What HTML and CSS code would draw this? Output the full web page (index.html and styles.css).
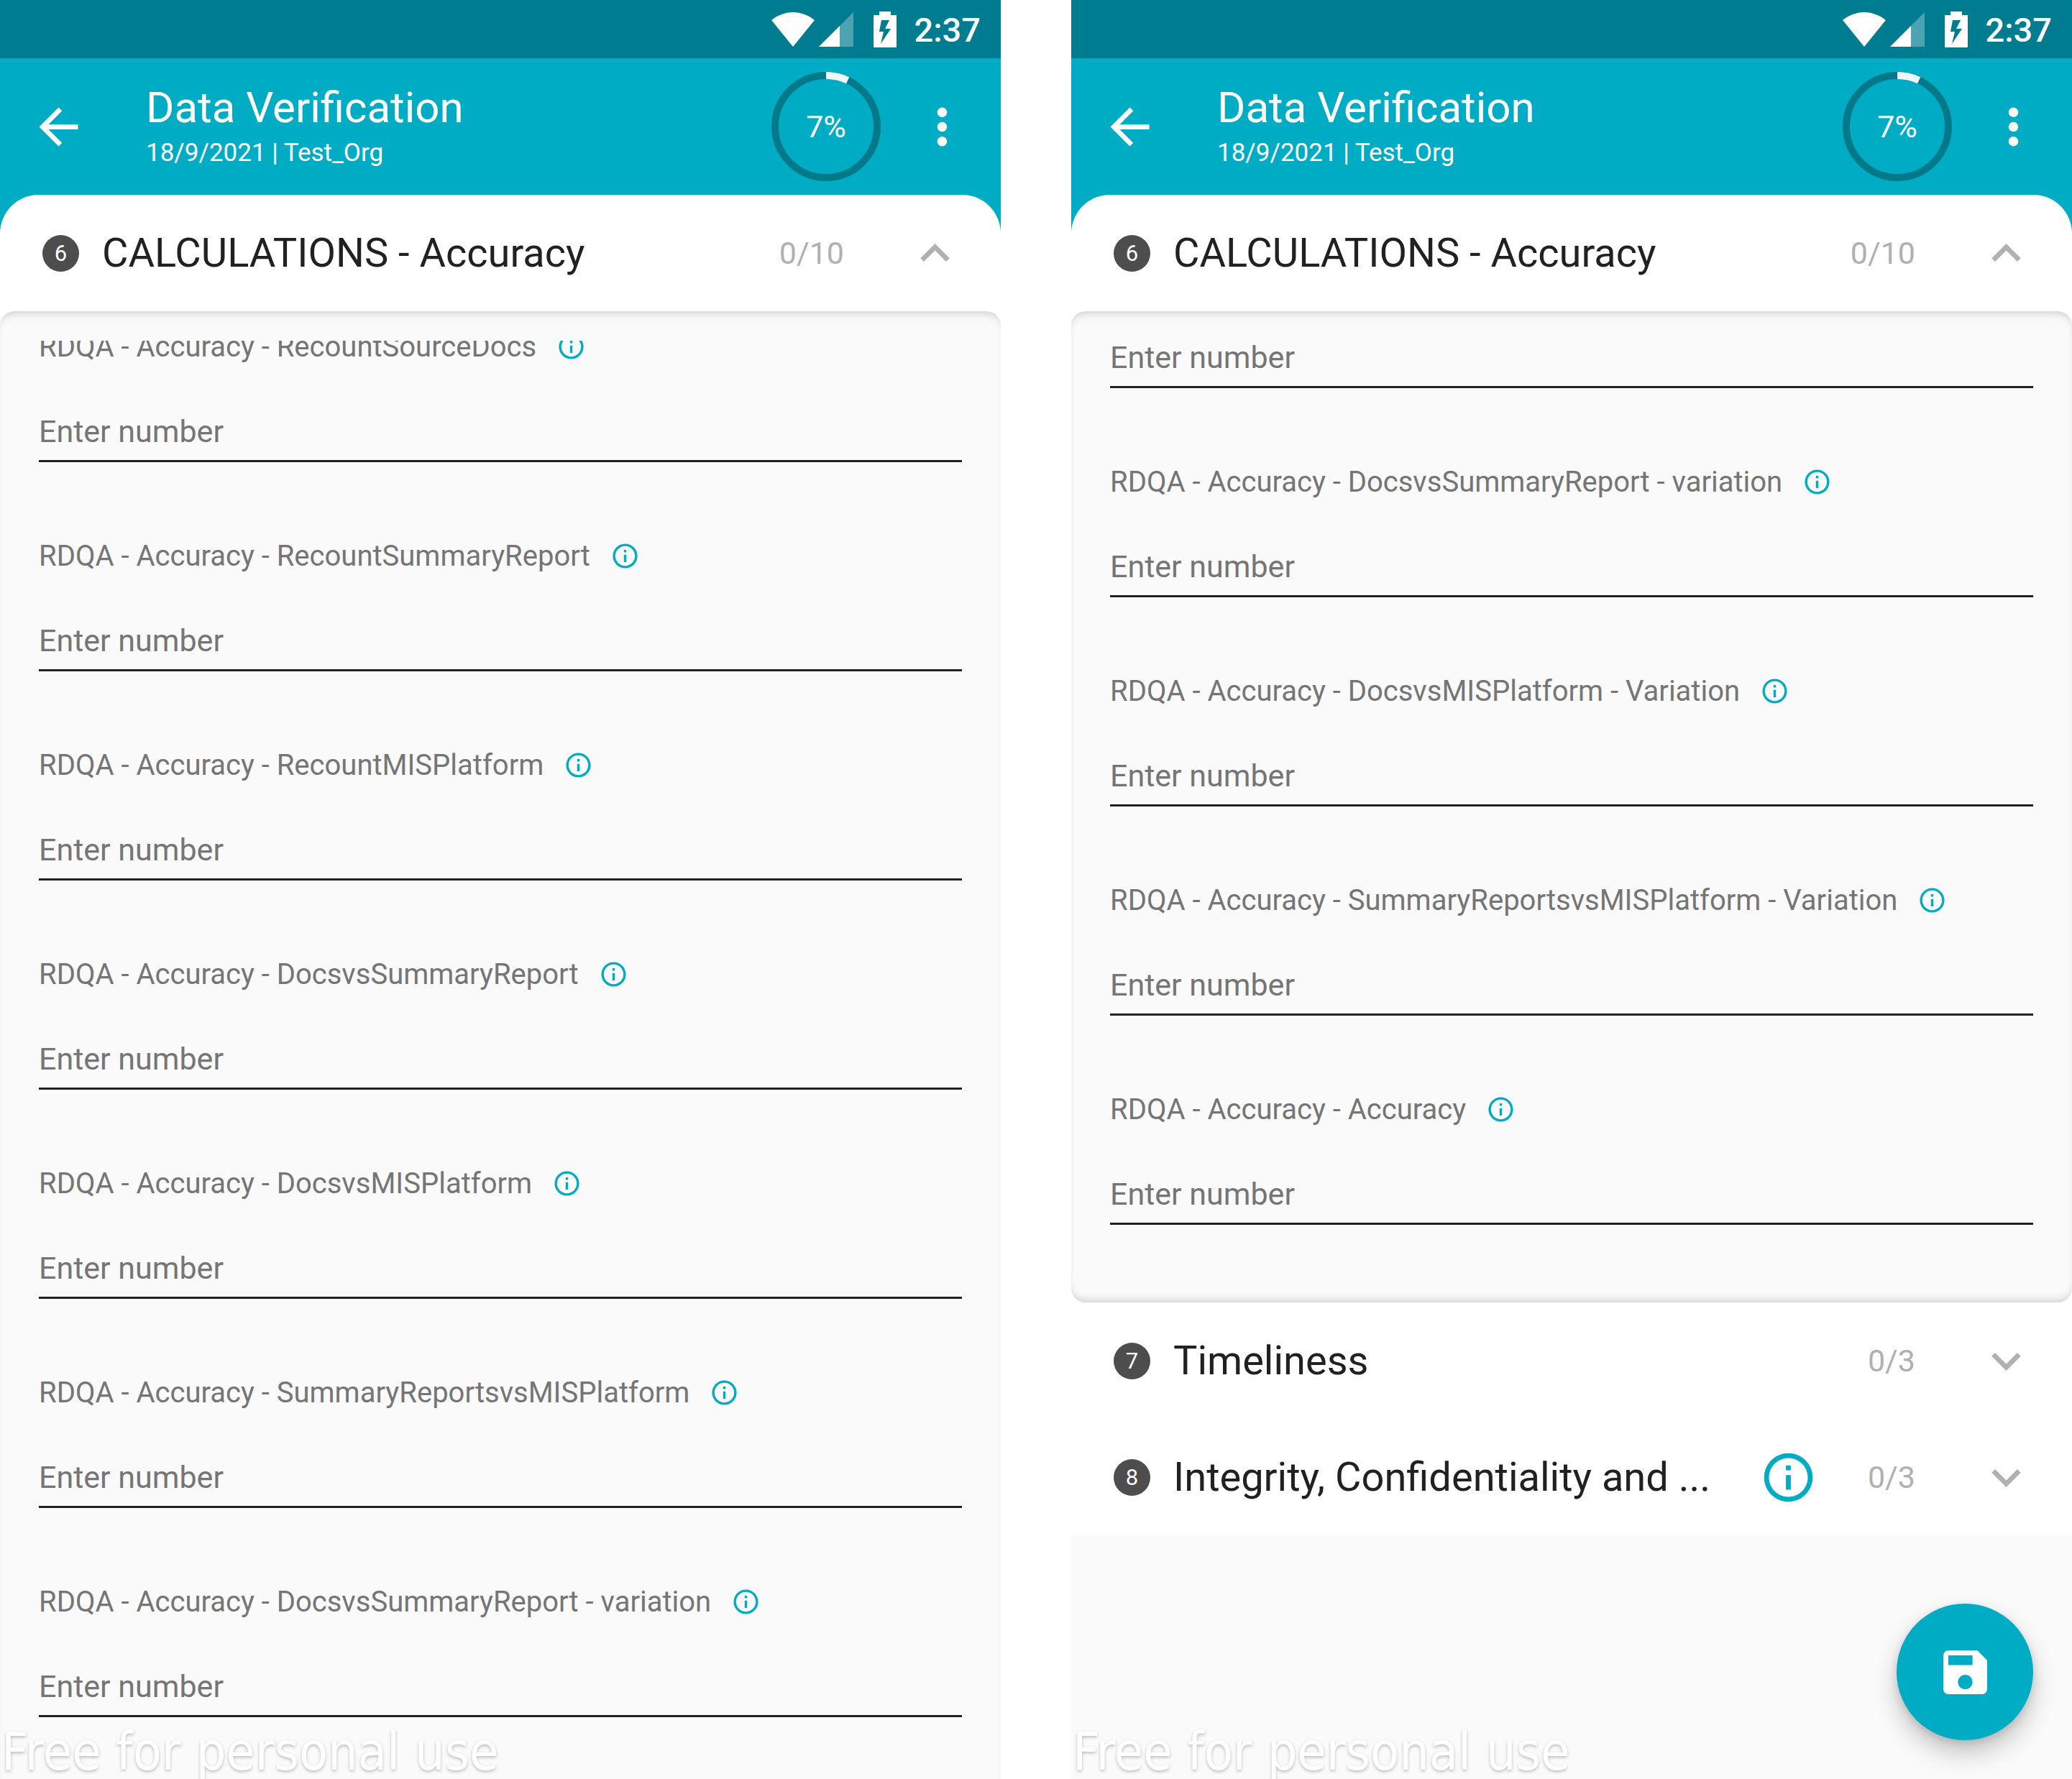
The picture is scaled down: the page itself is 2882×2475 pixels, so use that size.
FILE: index.html
```
<!DOCTYPE html>
<html lang="en">
<head>
<meta charset="utf-8">
<title>Data Verification</title>
<link rel="stylesheet" href="styles.css">
</head>
<body>
<svg class="sprite" aria-hidden="true">
  <symbol id="i-back" viewBox="0 0 24 24"><path d="M20 11H7.83l5.59-5.59L12 4l-8 8 8 8 1.41-1.41L7.83 13H20v-2z"/></symbol>
  <symbol id="i-more" viewBox="0 0 24 24"><path d="M12 8c1.1 0 2-.9 2-2s-.9-2-2-2-2 .9-2 2 .9 2 2 2zm0 2c-1.1 0-2 .9-2 2s.9 2 2 2 2-.9 2-2-.9-2-2-2zm0 6c-1.1 0-2 .9-2 2s.9 2 2 2 2-.9 2-2-.9-2-2-2z"/></symbol>
  <symbol id="i-info" viewBox="0 0 24 24"><path d="M11 7h2v2h-2zm0 4h2v6h-2zm1-9C6.48 2 2 6.48 2 12s4.480 10 10 10 10-4.480 10-10S17.520 2 12 2zm0 18c-4.410 0-8-3.590-8-8s3.590-8 8-8 8 3.590 8 8-3.590 8-8 8z"/></symbol>
  <symbol id="i-up" viewBox="0 0 24 24"><path d="M12 8l-6 6 1.410 1.410L12 10.830l4.590 4.580L18 14z"/></symbol>
  <symbol id="i-down" viewBox="0 0 24 24"><path d="M16.590 8.590L12 13.170 7.410 8.590 6 10l6 6 6-6z"/></symbol>
  <symbol id="i-save" viewBox="0 0 24 24"><path d="M17 3H5c-1.110 0-2 .9-2 2v14c0 1.100.890 2 2 2h14c1.100 0 2-.9 2-2V7l-4-4zm-5 16c-1.660 0-3-1.340-3-3s1.340-3 3-3 3 1.340 3 3-1.340 3-3 3zm3-10H5V5h10v4z"/></symbol>
  <symbol id="i-wifi" viewBox="0 0 60 48"><path d="M30 48L0 11C9 4 19 0 30 0s21 4 30 11z"/></symbol>
  <symbol id="i-signal" viewBox="0 0 48 48"><path d="M48 0v48H0z" opacity=".3"/><path d="M29 19v29H0z"/></symbol>
  <symbol id="i-battery" viewBox="0 0 32 50"><path fill-rule="evenodd" d="M8 0h16v5h8v45H0V5h8zM11 12L8 28h6L10 45 24 24h-8l6-12z"/></symbol>
</svg>

<main class="board">
  <section class="screen" aria-label="Accuracy questions">
    <div class="status">
      <svg class="wifi"><use href="#i-wifi"/></svg>
      <svg class="signal"><use href="#i-signal"/></svg>
      <svg class="battery"><use href="#i-battery"/></svg>
      <span class="clock">2:37</span>
    </div>
    <header class="toolbar">
      <button class="icon-btn" aria-label="Back"><svg class="icon"><use href="#i-back"/></svg></button>
      <div class="heading">
        <h1 class="title">Data Verification</h1>
        <p class="subtitle">18/9/2021 | Test_Org</p>
      </div>
      <div class="progress">
        <svg class="ring" viewBox="0 0 152 152"><circle class="track" cx="76" cy="76" r="71"/><circle class="value" cx="76" cy="76" r="71" pathLength="100" stroke-dasharray="7 93" transform="rotate(-90 76 76)"/></svg>
        <span class="percent">7%</span>
      </div>
      <button class="icon-btn" aria-label="More options"><svg class="icon"><use href="#i-more"/></svg></button>
    </header>
    <div class="cap">
      <button class="section" aria-expanded="true">
        <span class="badge">6</span><span class="name">CALCULATIONS - Accuracy</span><span class="count">0/10</span><svg class="icon chevron"><use href="#i-up"/></svg>
      </button>
    </div>
    <div class="panel panel-open">
      <div class="scroller">
        <div class="fields scrolled-label">
          <div class="field"><div class="label-row"><label for="a1">RDQA - Accuracy - RecountSourceDocs</label><svg class="hint"><use href="#i-info"/></svg></div><input id="a1" type="text" inputmode="numeric" placeholder="Enter number"></div>
          <div class="field"><div class="label-row"><label for="a2">RDQA - Accuracy - RecountSummaryReport</label><svg class="hint"><use href="#i-info"/></svg></div><input id="a2" type="text" inputmode="numeric" placeholder="Enter number"></div>
          <div class="field"><div class="label-row"><label for="a3">RDQA - Accuracy - RecountMISPlatform</label><svg class="hint"><use href="#i-info"/></svg></div><input id="a3" type="text" inputmode="numeric" placeholder="Enter number"></div>
          <div class="field"><div class="label-row"><label for="a4">RDQA - Accuracy - DocsvsSummaryReport</label><svg class="hint"><use href="#i-info"/></svg></div><input id="a4" type="text" inputmode="numeric" placeholder="Enter number"></div>
          <div class="field"><div class="label-row"><label for="a5">RDQA - Accuracy - DocsvsMISPlatform</label><svg class="hint"><use href="#i-info"/></svg></div><input id="a5" type="text" inputmode="numeric" placeholder="Enter number"></div>
          <div class="field"><div class="label-row"><label for="a6">RDQA - Accuracy - SummaryReportsvsMISPlatform</label><svg class="hint"><use href="#i-info"/></svg></div><input id="a6" type="text" inputmode="numeric" placeholder="Enter number"></div>
          <div class="field"><div class="label-row"><label for="a7">RDQA - Accuracy - DocsvsSummaryReport - variation</label><svg class="hint"><use href="#i-info"/></svg></div><input id="a7" type="text" inputmode="numeric" placeholder="Enter number"></div>
        </div>
      </div>
    </div>
    <p class="watermark">Free for personal use</p>
  </section>

  <section class="screen" aria-label="Accuracy questions, end of list">
    <div class="status">
      <svg class="wifi"><use href="#i-wifi"/></svg>
      <svg class="signal"><use href="#i-signal"/></svg>
      <svg class="battery"><use href="#i-battery"/></svg>
      <span class="clock">2:37</span>
    </div>
    <header class="toolbar">
      <button class="icon-btn" aria-label="Back"><svg class="icon"><use href="#i-back"/></svg></button>
      <div class="heading">
        <h1 class="title">Data Verification</h1>
        <p class="subtitle">18/9/2021 | Test_Org</p>
      </div>
      <div class="progress">
        <svg class="ring" viewBox="0 0 152 152"><circle class="track" cx="76" cy="76" r="71"/><circle class="value" cx="76" cy="76" r="71" pathLength="100" stroke-dasharray="7 93" transform="rotate(-90 76 76)"/></svg>
        <span class="percent">7%</span>
      </div>
      <button class="icon-btn" aria-label="More options"><svg class="icon"><use href="#i-more"/></svg></button>
    </header>
    <div class="cap">
      <button class="section" aria-expanded="true">
        <span class="badge">6</span><span class="name">CALCULATIONS - Accuracy</span><span class="count">0/10</span><svg class="icon chevron"><use href="#i-up"/></svg>
      </button>
    </div>
    <div class="panel">
      <div class="scroller">
        <div class="fields scrolled-input">
          <div class="field"><input type="text" inputmode="numeric" placeholder="Enter number" aria-label="Value"></div>
          <div class="field"><div class="label-row"><label for="b1">RDQA - Accuracy - DocsvsSummaryReport - variation</label><svg class="hint"><use href="#i-info"/></svg></div><input id="b1" type="text" inputmode="numeric" placeholder="Enter number"></div>
          <div class="field"><div class="label-row"><label for="b2">RDQA - Accuracy - DocsvsMISPlatform - Variation</label><svg class="hint"><use href="#i-info"/></svg></div><input id="b2" type="text" inputmode="numeric" placeholder="Enter number"></div>
          <div class="field"><div class="label-row"><label for="b3">RDQA - Accuracy - SummaryReportsvsMISPlatform - Variation</label><svg class="hint"><use href="#i-info"/></svg></div><input id="b3" type="text" inputmode="numeric" placeholder="Enter number"></div>
          <div class="field"><div class="label-row"><label for="b4">RDQA - Accuracy - Accuracy</label><svg class="hint"><use href="#i-info"/></svg></div><input id="b4" type="text" inputmode="numeric" placeholder="Enter number"></div>
        </div>
      </div>
    </div>
    <button class="section" aria-expanded="false">
      <span class="badge">7</span><span class="name">Timeliness</span><span class="count">0/3</span><svg class="icon chevron"><use href="#i-down"/></svg>
    </button>
    <button class="section" aria-expanded="false">
      <span class="badge">8</span><span class="name">Integrity, Confidentiality and ...</span><svg class="icon about"><use href="#i-info"/></svg><span class="count">0/3</span><svg class="icon chevron"><use href="#i-down"/></svg>
    </button>
    <p class="watermark">Free for personal use</p>
    <button class="fab" aria-label="Save"><svg class="icon"><use href="#i-save"/></svg></button>
  </section>
</main>
</body>
</html>
```
FILE: styles.css
```
:root {
  --primary: #00acc4;
  --primary-dark: #007c91;
  --ink: #212121;
  --muted: #757575;
  --faint: #b0b0b0;
  --surface: #fafafa;
}

* { box-sizing: border-box; }

body {
  margin: 0;
  background: #fff;
  color: var(--ink);
  font-family: Roboto, sans-serif;
}

h1, p { margin: 0; font-weight: 400; }

button {
  margin: 0;
  padding: 0;
  border: 0;
  background: none;
  color: inherit;
  font: inherit;
  text-align: left;
}

svg { display: block; flex: none; fill: currentColor; }
.sprite { position: absolute; width: 0; height: 0; }
.icon { width: 81px; height: 81px; }

.board {
  display: grid;
  grid-template-columns: 1fr 1fr;
  column-gap: 98px;
  min-height: 100vh;
}

.screen {
  position: relative;
  display: flex;
  flex-direction: column;
  min-width: 0;
  overflow: hidden;
  background: var(--surface);
}

/* Status bar */
.status {
  display: flex;
  align-items: center;
  justify-content: flex-end;
  height: 81px;
  padding-right: 28px;
  background: var(--primary-dark);
  color: #fff;
}
.wifi { width: 60px; height: 48px; }
.signal { width: 48px; height: 48px; margin-left: 6px; }
.battery { width: 32px; height: 50px; margin: 0 24px 0 28px; }
.clock { font-size: 47px; font-weight: 500; line-height: 56px; padding-top: 2px; }

/* App bar */
.toolbar {
  display: flex;
  align-items: center;
  height: 190px;
  padding: 0 41px;
  background: var(--primary);
  color: #fff;
}
.heading { flex: 1; margin-left: 81px; }
.title { font-size: 60px; line-height: 66px; }
.subtitle { font-size: 35px; line-height: 44px; padding-top: 8px; }
.progress { display: grid; place-items: center; margin-right: 45px; }
.ring, .percent { grid-area: 1 / 1; }
.ring { width: 152px; height: 152px; fill: none; stroke-width: 10; }
.track { stroke: #007a8a; }
.value { stroke: #eef6f9; }
.percent { font-size: 43px; }

/* Section rows */
.cap { background: var(--primary); }
.cap .section { border-radius: 54px 54px 0 0; }
.section {
  display: flex;
  align-items: center;
  width: 100%;
  height: 162px;
  padding: 0 51px 0 59px;
  background: #fff;
}
.badge {
  display: grid;
  place-items: center;
  width: 51px;
  height: 51px;
  border-radius: 50%;
  background: #4d4d4d;
  color: #fff;
  font-size: 31px;
}
.name {
  flex: 1;
  min-width: 0;
  margin-left: 32px;
  font-size: 56px;
  line-height: 64px;
  white-space: nowrap;
}
.about { margin-right: 70px; color: var(--primary); }
.count { color: var(--faint); font-size: 43px; }
.chevron { margin-left: 86px; color: var(--faint); }

/* Expanded panel: shaded along the top and bottom edges, white outside the corners */
.panel {
  padding: 41px 54px 108px;
  border-radius: 20px;
  background: var(--surface);
  box-shadow:
    inset 0 10px 14px -9px rgba(0, 0, 0, .22),
    inset 0 -10px 14px -9px rgba(0, 0, 0, .22),
    0 0 0 32px #fff;
  clip-path: inset(0);
}
.panel-open {
  flex: 1;
  padding-bottom: 0;
  border-radius: 20px 20px 0 0;
  box-shadow: inset 0 10px 14px -9px rgba(0, 0, 0, .22), 0 0 0 32px #fff;
}
.scroller { overflow: hidden; }
.scrolled-label { margin-top: -20px; }
.scrolled-input { margin-top: -2px; }

.field { padding-top: 102px; }
.field:first-child { padding-top: 0; }
.label-row {
  display: flex;
  align-items: center;
  gap: 28px;
  height: 56px;
  margin-bottom: 65px;
  color: var(--muted);
  font-size: 40px;
}
.hint { width: 41px; height: 41px; color: var(--primary); }

.field input {
  display: block;
  width: 100%;
  height: 68px;
  padding: 0 0 15px;
  border: 0;
  border-bottom: 3px solid var(--ink);
  border-radius: 0;
  outline: 0;
  background: none;
  color: var(--ink);
  font: inherit;
  font-size: 43px;
  line-height: 50px;
}
.field input::placeholder { color: var(--muted); opacity: 1; }

/* Overlays */
.watermark {
  position: absolute;
  left: 2px;
  bottom: -4px;
  color: #fff;
  font: 73px/84px "DejaVu Sans Condensed", "DejaVu Sans", sans-serif;
  text-shadow: 0 2px 4px rgba(0, 0, 0, .25);
}
.fab {
  position: absolute;
  right: 54px;
  bottom: 54px;
  display: grid;
  place-items: center;
  width: 190px;
  height: 190px;
  border-radius: 50%;
  background: var(--primary);
  color: #fff;
  box-shadow: 0 18px 34px rgba(0, 0, 0, .22), 0 4px 12px rgba(0, 0, 0, .12);
}
```
